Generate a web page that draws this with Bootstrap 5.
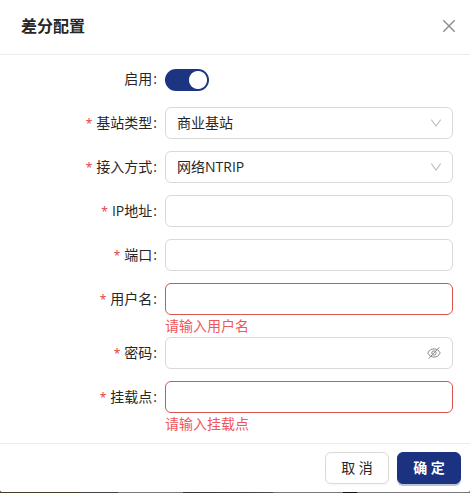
<!DOCTYPE html>
<html lang="zh-CN">
<head>
<meta charset="utf-8">
<meta name="viewport" content="width=device-width, initial-scale=1">
<title>差分配置</title>
<link href="https://cdn.jsdelivr.net/npm/bootstrap@5.3.0/dist/css/bootstrap.min.css" rel="stylesheet">
<style>
  body {
    font-family: "Open Sans", "Noto Sans CJK SC", sans-serif;
    font-size: 14px;
    line-height: 22px;
    color: #262626;
    background: linear-gradient(90deg, #4a3a26 0, #4a3a26 17%, #444 17%, #444 25%, #777 25%, #777 39%, #333 39%, #4a4a4a 58%, #777 58%, #777 73%, #111 73%, #111 76%, #777 76%);
  }
  .config-dialog { background: #fff; border-radius: 0 0 2px 2px; margin-bottom: 1px; }
  .dialog-head { height: 55px; padding: 0 14px 2px 21px; border-color: #ececec !important; }
  .dialog-title { font-size: 16px; line-height: 24px; font-weight: 700; }
  .close-btn { color: #8c8c8c; line-height: 0; }
  .dialog-form { padding: 8px 17px 8px 21px; }
  .field-row { margin-bottom: 12px; }
  .field-row.has-error, .field-row:last-child { margin-bottom: 0; }
  .field-label { height: 32px; line-height: 32px; padding-right: 8px; text-align: right; white-space: nowrap; }
  .field-label::after { content: ":"; margin-left: 1px; }
  .required::before { content: "*"; color: #e0484c; margin-right: 4px; font-family: "Noto Sans", sans-serif; font-size: 12px; }
  .field-input, .field-input:focus {
    height: 32px;
    padding: 4px 11px;
    font-size: 14px;
    line-height: 22px;
    color: #262626;
    border: 1px solid #d9d9d9;
    border-radius: 6px;
    box-shadow: none;
  }
  select.field-input {
    --bs-form-select-bg-img: url("data:image/svg+xml,%3Csvg xmlns='http://www.w3.org/2000/svg' viewBox='0 0 12 12'%3E%3Cpath d='M1.3 2.6 6 9l4.7-6.400' fill='none' stroke='%23bfbfbf' stroke-width='1.1'/%3E%3C/svg%3E");
    background-image: var(--bs-form-select-bg-img);
    background-size: 12px 12px;
    background-position: right 10px center;
  }
  .field-input.is-invalid, .field-input.is-invalid:focus { border-color: #d9534f; background-image: none; box-shadow: none; }
  .error-text { font-size: 14px; line-height: 22px; margin: 0; color: #f0565a; }
  .switch-box { min-height: 32px; padding: 6px 0 4px; line-height: 0; }
  .switch-box .form-check-input, .switch-box .form-check-input:focus {
    float: none;
    width: 44px;
    height: 22px;
    margin: 0;
    border: 0;
    box-shadow: none;
    background-color: #d9d9d9;
    background-image: radial-gradient(circle at center, #fff 0, #fff 8.5px, transparent 9.5px);
    background-size: 22px 22px;
    background-repeat: no-repeat;
  }
  .switch-box .form-check-input:checked { background-color: #1b3583; background-position: right center; }
  .eye-btn { top: 0; right: 12px; height: 32px; color: #8c8c8c; line-height: 0; }
  .dialog-foot { padding: 8px 9px 8px; border-color: #ececec !important; }
  .foot-btn { width: 64px; height: 32px; padding: 0; font-size: 14px; line-height: 30px; border-radius: 6px; }
  .btn-cancel { --bs-btn-color: #262626; --bs-btn-bg: #fff; --bs-btn-border-color: #d9d9d9; box-shadow: 0 2px 0 #fafafa; }
  .btn-ok { --bs-btn-color: #fff; --bs-btn-bg: #1a3280; --bs-btn-border-color: #1a3280; --bs-btn-hover-color: #fff; --bs-btn-hover-bg: #27469c; box-shadow: 0 2px 0 #bcc3d6; font-weight: 700; }
</style>
</head>
<body>
<main class="config-dialog" role="dialog" aria-labelledby="dialogTitle">
  <header class="dialog-head d-flex align-items-center justify-content-between border-bottom">
    <h1 class="dialog-title mb-0" id="dialogTitle">差分配置</h1>
    <button type="button" class="close-btn btn p-0 border-0" aria-label="关闭">
      <svg width="14" height="14" viewBox="0 0 14 14" fill="none" stroke="currentColor" stroke-width="1.4"><path d="M1.3 1.3l11.4 11.4M12.7 1.3 1.3 12.7"/></svg>
    </button>
  </header>
  <form id="configForm" class="dialog-form" novalidate>
    <div class="field-row row g-0">
      <label class="field-label col-4" for="enabled">启用</label>
      <div class="col-8"><div class="switch-box form-check form-switch mb-0"><input class="form-check-input" type="checkbox" role="switch" id="enabled" checked></div></div>
    </div>
    <div class="field-row row g-0">
      <label class="field-label required col-4" for="station">基站类型</label>
      <div class="col-8"><select class="form-select field-input" id="station"><option>商业基站</option></select></div>
    </div>
    <div class="field-row row g-0">
      <label class="field-label required col-4" for="access">接入方式</label>
      <div class="col-8"><select class="form-select field-input" id="access"><option>网络NTRIP</option></select></div>
    </div>
    <div class="field-row row g-0">
      <label class="field-label required col-4" for="ip">IP地址</label>
      <div class="col-8"><input class="form-control field-input" type="text" id="ip"></div>
    </div>
    <div class="field-row row g-0">
      <label class="field-label required col-4" for="port">端口</label>
      <div class="col-8"><input class="form-control field-input" type="text" id="port"></div>
    </div>
    <div class="field-row has-error row g-0">
      <label class="field-label required col-4" for="user">用户名</label>
      <div class="col-8">
        <input class="form-control field-input is-invalid" type="text" id="user" aria-describedby="userError">
        <div class="invalid-feedback error-text" id="userError">请输入用户名</div>
      </div>
    </div>
    <div class="field-row row g-0">
      <label class="field-label required col-4" for="password">密码</label>
      <div class="col-8 position-relative">
        <input class="form-control field-input" type="password" id="password">
        <button type="button" class="eye-btn btn p-0 border-0 position-absolute" aria-label="显示密码">
          <svg width="14" height="14" viewBox="0 0 14 14" fill="none" stroke="currentColor" stroke-width="1"><path d="M.8 7C2.2 4.2 4.3 2.9 7 2.9s4.800 1.300 6.200 4.100C11.800 9.800 9.700 11.100 7 11.100S2.200 9.800.8 7Z"/><circle cx="7" cy="7" r="2.200"/><path d="M1.700 12.500 12.300 1.300"/></svg>
        </button>
      </div>
    </div>
    <div class="field-row has-error row g-0">
      <label class="field-label required col-4" for="mount">挂载点</label>
      <div class="col-8">
        <input class="form-control field-input is-invalid" type="text" id="mount" aria-describedby="mountError">
        <div class="invalid-feedback error-text" id="mountError">请输入挂载点</div>
      </div>
    </div>
  </form>
  <footer class="dialog-foot d-flex justify-content-end gap-2 border-top">
    <button type="button" class="btn foot-btn btn-cancel">取 消</button>
    <button type="submit" form="configForm" class="btn foot-btn btn-ok">确 定</button>
  </footer>
</main>
<script src="https://cdn.jsdelivr.net/npm/bootstrap@5.3.0/dist/js/bootstrap.bundle.min.js"></script>
</body>
</html>
